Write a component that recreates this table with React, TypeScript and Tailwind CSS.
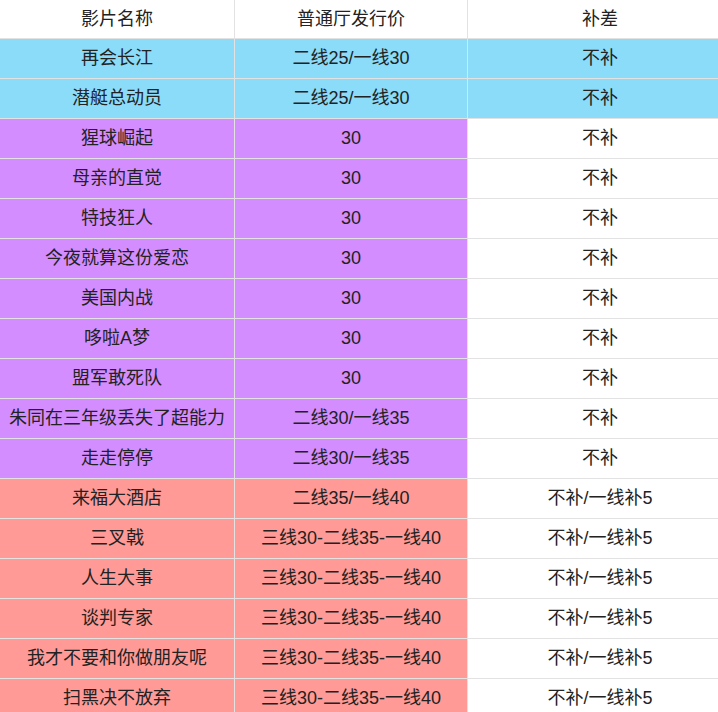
type Row = { name: string; price: string; diff: string; tone: "blue" | "purple" | "red" };

const rows: Row[] = [
  { name: "再会长江", price: "二线25/一线30", diff: "不补", tone: "blue" },
  { name: "潜艇总动员", price: "二线25/一线30", diff: "不补", tone: "blue" },
  { name: "猩球崛起", price: "30", diff: "不补", tone: "purple" },
  { name: "母亲的直觉", price: "30", diff: "不补", tone: "purple" },
  { name: "特技狂人", price: "30", diff: "不补", tone: "purple" },
  { name: "今夜就算这份爱恋", price: "30", diff: "不补", tone: "purple" },
  { name: "美国内战", price: "30", diff: "不补", tone: "purple" },
  { name: "哆啦A梦", price: "30", diff: "不补", tone: "purple" },
  { name: "盟军敢死队", price: "30", diff: "不补", tone: "purple" },
  { name: "朱同在三年级丢失了超能力", price: "二线30/一线35", diff: "不补", tone: "purple" },
  { name: "走走停停", price: "二线30/一线35", diff: "不补", tone: "purple" },
  { name: "来福大酒店", price: "二线35/一线40", diff: "不补/一线补5", tone: "red" },
  { name: "三叉戟", price: "三线30-二线35-一线40", diff: "不补/一线补5", tone: "red" },
  { name: "人生大事", price: "三线30-二线35-一线40", diff: "不补/一线补5", tone: "red" },
  { name: "谈判专家", price: "三线30-二线35-一线40", diff: "不补/一线补5", tone: "red" },
  { name: "我才不要和你做朋友呢", price: "三线30-二线35-一线40", diff: "不补/一线补5", tone: "red" },
  { name: "扫黑决不放弃", price: "三线30-二线35-一线40", diff: "不补/一线补5", tone: "red" },
];

const toneBg = {
  blue: "bg-[#8adcf9]",
  purple: "bg-[#d48dff]",
  red: "bg-[#ff9a96]",
};

function Cell({ children, bg, last }: { children: React.ReactNode; bg: string; last?: boolean }) {
  return (
    <div
      className={`flex items-center justify-center border-t border-[#e2e2e2] ${last ? "" : "border-r"} ${bg}`}
    >
      {children}
    </div>
  );
}

export default function App() {
  return (
    <div className="h-[712px] w-[718px] overflow-hidden bg-white">
      <div
        className="grid w-[732px] grid-cols-[235px_233px_264px] grid-rows-[38px] auto-rows-[40px] text-[18px] text-[#222]"
        style={{ fontFamily: '"Liberation Sans", "Noto Sans CJK SC", sans-serif' }}
      >
        <div className="col-span-3 grid grid-cols-subgrid">
          <div className="flex items-center justify-center border-r border-[#e2e2e2]">影片名称</div>
          <div className="flex items-center justify-center border-r border-[#e2e2e2]">普通厅发行价</div>
          <div className="flex items-center justify-center">补差</div>
        </div>
        {rows.map((r) => (
          <div key={r.name} className="col-span-3 grid grid-cols-subgrid">
            <Cell bg={toneBg[r.tone]}>{r.name}</Cell>
            <Cell bg={toneBg[r.tone]}>{r.price}</Cell>
            <Cell bg={r.tone === "blue" ? toneBg.blue : "bg-white"} last>
              {r.diff}
            </Cell>
          </div>
        ))}
      </div>
    </div>
  );
}
